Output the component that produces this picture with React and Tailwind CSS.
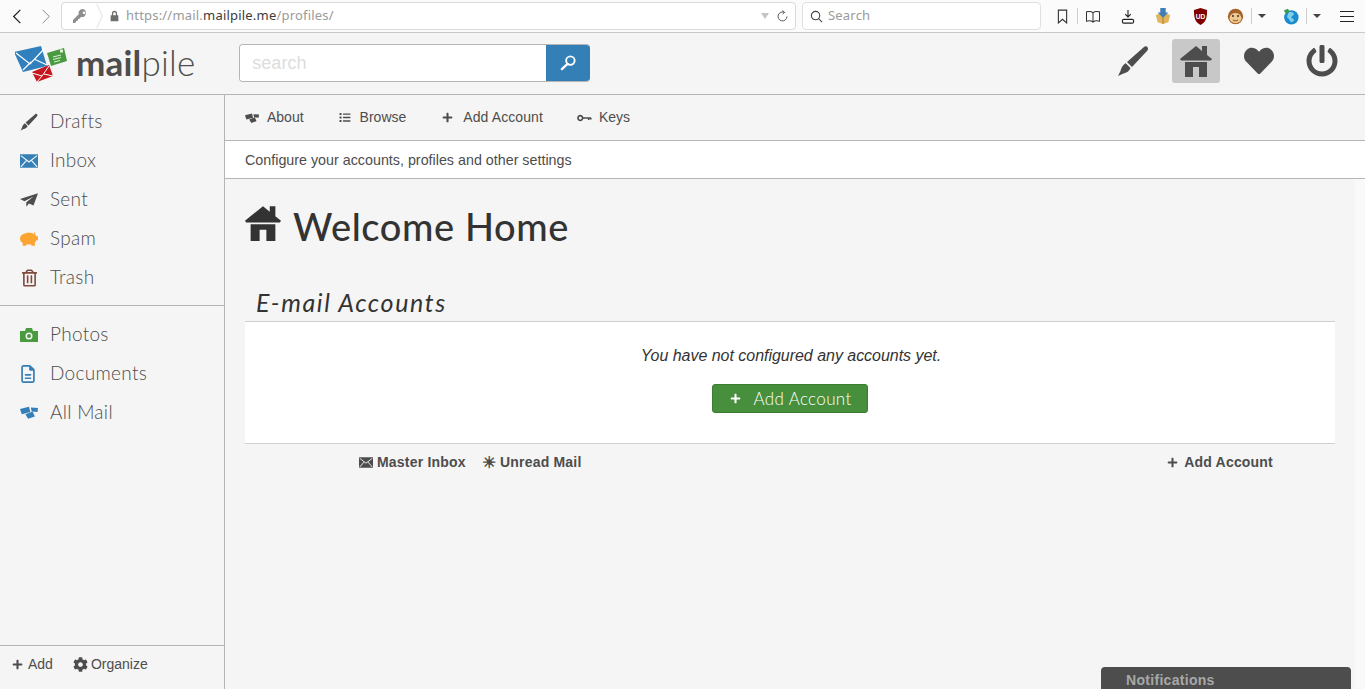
import { FaHeart, FaPowerOff, FaCog, FaPlus, FaRegTrashAlt, FaList } from "react-icons/fa";
import { FaRegFileLines } from "react-icons/fa6";

const slab = "font-['Lato','Liberation_Sans',sans-serif]";

const Pen = ({ className }) => (
  <svg viewBox="0 0 32 32" className={className} fill="currentColor">
    <path d="M31 3c-1-2-3-2-4-1L10 17l5 5L30 6c1-1 1-2 1-3z" />
    <path d="M9 18.500l4.500 4.500c-1 3-4 5-7 5.500L1 31l2.500-5c.5-3 2.500-6.500 5.500-8z" />
  </svg>
);

// font awesome 4 style house, with the chimney on the roof
const House = ({ className }) => (
  <svg viewBox="0 0 32 32" className={className} fill="currentColor">
    <path d="M16 1L0 14l1 1.500h30l1-1.500-5-4V1h-5v5z" />
    <path d="M5 17h22v15h-8V22h-6v10H5z" />
  </svg>
);

const Wrench = () => (
  <svg viewBox="0 0 16 16" className="w-[16px] h-[16px] text-[#8e8e8e]" fill="currentColor">
    <path d="M10.500 1a4 4 0 0 0-3.800 5.200L1 12v3h2l1-1v-1h1l1-1v-1h1l2-2a4 4 0 1 0 1.500-8zm1.500 2.500a1.300 1.300 0 1 1 0 2.600 1.300 1.300 0 0 1 0-2.600z" />
  </svg>
);

const Plane = ({ className }) => (
  <svg viewBox="0 0 20 15" className={className} fill="currentColor">
    <path d="M20 0L0 6.500l5 2.500L15 3.500 7 10v5l3-3.500 5 2z" />
  </svg>
);

const Piggy = ({ className }) => (
  <svg viewBox="0 0 20 16" className={className} fill="currentColor">
    <path d="M16.500 0l-1 3C14 2 12 1.500 10 1.500 4.500 1.500 0 4.500 0 8c0 2.500 1.500 4 3 5v3h4v-1.500c2 .4 4 .4 5.500 0V16h4v-3.500c1-.7 1.300-1.500 1.500-2.500h2V5.500h-2c-.3-.5-.6-1-1-1.400z" />
  </svg>
);

const Camera = ({ className }) => (
  <svg viewBox="0 0 18 14" className={className} fill="currentColor">
    <path fillRule="evenodd" d="M0 3h5l1-3h6l1 3h5v11H0zM9 4.500a3.500 3.500 0 1 0 0 7 3.500 3.500 0 0 0 0-7zM9 6a2 2 0 1 1 0 4 2 2 0 0 1 0-4z" />
  </svg>
);

const Envelope = ({ className, lines = "#f5f5f5" }) => (
  <svg viewBox="0 0 20 15" className={className}>
    <rect width="20" height="15" fill="currentColor" />
    <path d="M1 1.500l9 7 9-7M1 14l6.500-7.500M19 14l-6.500-7.500" fill="none" stroke={lines} strokeWidth="1.300" />
  </svg>
);

const Mails = ({ className }) => (
  <svg viewBox="0 0 20 14" className={className} fill="currentColor">
    <path d="M0 3l10-2.500 1.500 6L2 9z" />
    <path d="M12 1.500l8 .5-.5 4.500-6.500-.5z" />
    <path d="M6 9l8-3 2.500 5.500L9 14z" />
  </svg>
);

const Key = ({ className }) => (
  <svg viewBox="0 0 16 8" className={className} fill="none" stroke="currentColor">
    <circle cx="3.500" cy="4" r="2.500" strokeWidth="1.700" />
    <path d="M6 4h9M12.500 4v2M14.800 4v1.500" strokeWidth="1.700" />
  </svg>
);

const Logo = () => (
  <svg viewBox="0 0 52 38" className="w-[52px] h-[38px]">
    <path d="M0 6L27 0l6 20-24 6z" transform="translate(-1 1)" fill="#2f80bd" />
    <path d="M1 8l14 11L30 3M8 25l8-8M32 20l-13-6" fill="none" stroke="#fff" strokeWidth="1.200" />
    <path d="M32 8l17-5 3 13-16 5z" fill="#4a9a3f" />
    <path d="M38 12l8-2M38 14.500l8-2M39 17l6-1.500" stroke="#dff0d8" strokeWidth="1" />
    <rect x="45" y="4.500" width="3" height="3" fill="#dff0d8" />
    <path d="M18 28l17-7 4 11-16 6z" transform="translate(-1 -1)" fill="#c4161c" />
    <path d="M17 28l10 3 7-10M22 37l5-6M38 31l-9-2" fill="none" stroke="#fff" strokeWidth="1" />
  </svg>
);

const Puzzle = () => (
  <svg viewBox="0 0 20 20" className="w-[18px] h-[18px]">
    <path d="M2 9l8-3 8 3-2 8-6 2-6-2z" fill="#e2b45c" />
    <path d="M10 11v8" stroke="#a87a2a" />
    <path d="M7 1h6v5h3l-6 6-6-6h3z" fill="#3f7fb5" />
  </svg>
);

const Shield = () => (
  <svg viewBox="0 0 16 18" className="w-[15px] h-[17px]">
    <path d="M8 0l7 2c0 8-1 13-7 16C2 15 1 10 1 2z" fill="#800000" />
    <text x="8" y="11.500" textAnchor="middle" fontSize="7" fontWeight="700" fill="#fff" fontFamily="Liberation Sans">UD</text>
  </svg>
);

const Monkey = () => (
  <svg viewBox="0 0 20 20" className="w-[17px] h-[17px]">
    <circle cx="10" cy="10" r="9" fill="#a5622a" />
    <ellipse cx="10" cy="12" rx="7" ry="6" fill="#f0c98e" />
    <circle cx="7" cy="9.500" r="1.200" fill="#333" />
    <circle cx="13" cy="9.500" r="1.200" fill="#333" />
    <path d="M7 14c2 1.500 4 1.500 6 0" stroke="#6b3a13" fill="none" />
  </svg>
);

const Globe = () => (
  <svg viewBox="0 0 20 20" className="w-[17px] h-[17px]">
    <circle cx="11" cy="11" r="8.500" fill="#1c8ccf" />
    <path d="M8 5c3-1 6 0 6 2s-3 2-3 4 3 1 3 3-3 3-4 2-1-3-3-4 0-5 1-7z" fill="#7fd0ea" />
    <path d="M2 3l5-2 2 3-4 3z" fill="#3c9a52" />
  </svg>
);

const Caret = () => <span className="w-0 h-0 border-x-[4px] border-x-transparent border-t-[4px] border-t-[#444]" />;

const BrowserBar = () => (
  <div className="h-[33px] shrink-0 bg-[#fbfbfb] border-b border-[#c9c9c9] flex items-center text-[#8a8a8a]">
    <svg viewBox="0 0 12 18" className="w-[10px] h-[15px] ml-[12px] text-[#222]" fill="none" stroke="currentColor" strokeWidth="1.500"><path d="M10 1L2 9l8 8" /></svg>
    <svg viewBox="0 0 12 18" className="w-[10px] h-[15px] ml-[19px] text-[#8c8c8c]" fill="none" stroke="currentColor" strokeWidth="1.200"><path d="M2 1l8 8-8 8" /></svg>
    <div className="ml-[10px] w-[735px] h-[28px] bg-white border border-[#d9d9d9] rounded-[4px] flex items-center relative">
      <div className="w-[34px] flex justify-center pl-[2px]"><Wrench /></div>
      <svg viewBox="0 0 8 28" className="w-[7px] h-[26px] text-[#dcdcdc]" fill="none" stroke="currentColor"><path d="M1 0l6 14-6 14" /></svg>
      <svg viewBox="0 0 12 14" className="w-[11px] h-[12px] ml-[6px] text-[#6e6e6e]" fill="currentColor"><path d="M3 6V4a3 3 0 0 1 6 0v2h1.500v7h-9V6zm1.500 0h3V4a1.500 1.500 0 0 0-3 0z" /></svg>
      <span className="ml-[6px] text-[13px] font-['Noto_Sans',sans-serif] text-[#9a9a9a] tracking-[0.2px]">https://mail.<span className="text-[#3c3c3c]">mailpile.me</span>/profiles/</span>
      <span className="ml-auto w-0 h-0 border-x-[4px] border-x-transparent border-t-[6px] border-t-[#c4c4c4]" />
      <svg viewBox="0 0 16 16" className="w-[13px] h-[13px] ml-[7px] mr-[6px] text-[#555]" fill="none" stroke="currentColor" strokeWidth="1.200"><path d="M13.500 8a5.500 5.500 0 1 1-3-5M8 .500l2.500 2.500L8 5" /></svg>
    </div>
    <div className="ml-[6px] w-[239px] h-[28px] bg-white border border-[#e0e0e0] rounded-[4px] flex items-center pl-[7px]">
      <svg viewBox="0 0 14 14" className="w-[13px] h-[13px] text-[#444]" fill="none" stroke="currentColor" strokeWidth="1.200"><circle cx="6" cy="6" r="4.500" /><path d="M9.500 9.500L13 13" /></svg>
      <span className="ml-[5px] text-[13px] font-['Noto_Sans',sans-serif] text-[#9a9a9a] tracking-[0.2px]">Search</span>
    </div>
    <svg viewBox="0 0 12 16" className="w-[11px] h-[15px] ml-[16px] text-[#333]" fill="none" stroke="currentColor" strokeWidth="1.200"><path d="M1.500 1h9v14L6 11l-4.500 4z" /></svg>
    <span className="w-px h-[16px] bg-[#ccc] ml-[9px]" />
    <svg viewBox="0 0 16 14" className="w-[16px] h-[13px] ml-[7px] text-[#333]" fill="none" stroke="currentColor" strokeWidth="1.100"><path d="M8 3C6.500 1.500 3 1.500 1 2v10c2-.5 5.500-.5 7 1 1.500-1.500 5-1.500 7-1V2c-2-.5-5.500-.5-7 1zm0 0v10" /></svg>
    <svg viewBox="0 0 14 16" className="w-[14px] h-[15px] ml-[20px] text-[#222]" fill="none" stroke="currentColor" strokeWidth="1.200"><path d="M7 1v7M4 5.500L7 8.500l3-3" /><rect x="1" y="11" width="12" height="4" rx="1.500" /></svg>
    <div className="ml-[19px]"><Puzzle /></div>
    <div className="ml-[21px]"><Shield /></div>
    <div className="ml-[19px]"><Monkey /></div>
    <span className="w-px h-[16px] bg-[#ccc] ml-[7px]" />
    <div className="ml-[6px] flex"><Caret /></div>
    <div className="ml-[16px]"><Globe /></div>
    <span className="w-px h-[16px] bg-[#ccc] ml-[7px]" />
    <div className="ml-[6px] flex"><Caret /></div>
    <div className="ml-[19px] w-[14px] flex flex-col gap-[4px]">
      <span className="h-px bg-[#222]" /><span className="h-px bg-[#222]" /><span className="h-px bg-[#222]" />
    </div>
  </div>
);

const AppHeader = () => (
  <div className="h-[62px] shrink-0 bg-[#f5f5f5] border-b border-[#b5b5b5] flex items-center text-[#4d4d4d]">
    <div className="ml-[15px]"><Logo /></div>
    <span className={`ml-[9px] mb-[3px] text-[35px] leading-none text-[#4d4d4d] tracking-[0.2px] ${slab}`}><span className="font-bold">mail</span><span className="font-light">pile</span></span>
    <div className="ml-[44px] mb-[2px] w-[351px] h-[38px] flex rounded-[4px] overflow-hidden border border-[#b5b5b5] border-r-0">
      <div className="flex-1 bg-white pl-[12px] pt-[1px] flex items-center text-[18px] text-[#ddd] font-['Liberation_Sans',sans-serif]">search</div>
      <div className="w-[44px] bg-[#337fb6] flex items-center justify-center">
        <svg viewBox="0 0 18 18" className="w-[17px] h-[17px] text-white" fill="none" stroke="currentColor"><circle cx="11" cy="7" r="4.500" strokeWidth="2" /><path d="M8 10.500L2 16" strokeWidth="2.500" strokeLinecap="round" /></svg>
      </div>
    </div>
    <div className="ml-auto mb-[5px] flex items-center pr-[27px]">
      <Pen className="w-[32px] h-[32px]" />
      <div className="ml-[23px] w-[48px] h-[44px] rounded-[3px] bg-[#c8c8c8] flex items-center justify-center"><House className="w-[32px] h-[32px]" /></div>
      <FaHeart className="ml-[24px] w-[30px] h-[30px]" />
      <FaPowerOff className="ml-[32px] w-[32px] h-[32px]" />
    </div>
  </div>
);

const folders = [
  { label: "Drafts", color: "text-[#4d4d4d]", icon: <Pen className="w-[18px] h-[18px]" /> },
  { label: "Inbox", color: "text-[#337fb6]", icon: <Envelope className="w-[18px] h-[14px]" /> },
  { label: "Sent", color: "text-[#4d4d4d]", icon: <Plane className="w-[18px] h-[14px]" /> },
  { label: "Spam", color: "text-[#fba42f]", icon: <Piggy className="w-[18px] h-[15px]" /> },
  { label: "Trash", color: "text-[#7f4a3a]", icon: <FaRegTrashAlt className="w-[15px] h-[18px] ml-[2px]" /> },
];

const tags = [
  { label: "Photos", color: "text-[#4a9a3f]", icon: <Camera className="w-[18px] h-[14px]" /> },
  { label: "Documents", color: "text-[#337fb6]", icon: <FaRegFileLines className="w-[16px] h-[18px]" /> },
  { label: "All Mail", color: "text-[#337fb6]", icon: <Mails className="w-[18px] h-[13px]" /> },
];

const SideItem = ({ item }) => (
  <div className="h-[39px] flex items-center pl-[20px]">
    <span className={`w-[30px] flex ${item.color}`}>{item.icon}</span>
    <span className={`text-[19px] font-light text-[#4d4d4d] tracking-[0.3px] ${slab}`}>{item.label}</span>
  </div>
);

const Sidebar = () => (
  <div className="w-[225px] shrink-0 bg-[#f5f5f5] border-r border-[#b5b5b5] flex flex-col">
    <div className="pt-[7px] pb-[8px] border-b border-[#b5b5b5]">
      {folders.map((f) => <SideItem key={f.label} item={f} />)}
    </div>
    <div className="pt-[9px]">
      {tags.map((t) => <SideItem key={t.label} item={t} />)}
    </div>
    <div className="mt-auto h-[44px] pb-[6px] border-t border-[#b5b5b5] flex items-center pl-[12px] text-[14px] text-[#4d4d4d] font-['Liberation_Sans',sans-serif]">
      <FaPlus className="w-[11px] h-[11px]" />
      <span className="ml-[5px]">Add</span>
      <FaCog className="ml-[20px] w-[15px] h-[15px]" />
      <span className="ml-[3px]">Organize</span>
    </div>
  </div>
);

const SubNav = () => (
  <>
    <div className="h-[46px] shrink-0 bg-[#f5f5f5] border-b border-[#b5b5b5] flex items-center pl-[20px] text-[14px] text-[#4d4d4d]">
      <Mails className="w-[14px] h-[10px]" />
      <span className="ml-[8px]">About</span>
      <FaList className="ml-[34px] w-[14px] h-[11px]" />
      <span className="ml-[8px]">Browse</span>
      <FaPlus className="ml-[36px] w-[11px] h-[11px]" />
      <span className="ml-[10px] tracking-[0.1px]">Add Account</span>
      <Key className="ml-[34px] w-[15px] h-[8px]" />
      <span className="ml-[7px]">Keys</span>
    </div>
    <div className="h-[38px] shrink-0 bg-white border-b border-[#b5b5b5] flex items-center pt-[2px] pl-[20px] text-[14.3px] text-[#4d4d4d]">
      Configure your accounts, profiles and other settings
    </div>
  </>
);

const Content = () => (
  <div className="flex-1 bg-[#f9f9f9] relative min-h-0">
    <div className="h-full w-[1130px] bg-[#f5f5f5] rounded-tr-[4px] pl-[20px] pr-[20px]">
      <div className="flex items-center pt-[20px] h-[68px]">
        <House className="w-[36px] h-[36px] text-[#333]" />
        <h1 className={`ml-[12px] pt-[5px] text-[38px] leading-none font-medium text-[#333] tracking-[0.6px] ${slab}`}>Welcome Home</h1>
      </div>
      <h2 className={`mt-[40px] pl-[11px] text-[25px] leading-[30px] italic text-[#333] tracking-[1.6px] ${slab}`}>E-mail Accounts</h2>
      <div className="mt-[4px] h-[123px] bg-white border-y border-[#cfcfcf] flex flex-col items-center">
        <p className="mt-[24px] text-[16px] leading-[20px] italic text-[#333] ml-[2px] tracking-[-0.03px]">You have not configured any accounts yet.</p>
        <button className="mt-[18px] ml-[-1px] w-[156px] h-[29px] rounded-[3px] bg-[#478f3c] border border-[#3b7c32] flex items-center pl-[17px] text-white">
          <FaPlus className="w-[11px] h-[11px]" />
          <span className={`ml-[13px] text-[17px] font-light leading-none tracking-[0.35px] ${slab}`}>Add Account</span>
        </button>
      </div>
      <div className="h-[37px] flex items-center text-[14px] font-bold text-[#4d4d4d] tracking-[0.2px]">
        <Envelope className="ml-[114px] w-[14px] h-[11px]" />
        <span className="ml-[4px]">Master Inbox</span>
        <span className="ml-[16px] text-[16px] leading-none">☀</span>
        <span className="ml-[4px]">Unread Mail</span>
        <FaPlus className="ml-auto w-[11px] h-[11px]" />
        <span className="ml-[6px] mr-[62px]">Add Account</span>
      </div>
    </div>
    <div className="absolute right-[14px] bottom-0 w-[250px] h-[22px] bg-[#4d4d4d] rounded-t-[4px] pl-[25px] text-[14px] leading-[26px] font-bold text-[#a8a8a8] tracking-[0.3px]">
      Notifications
    </div>
  </div>
);

export default function App() {
  return (
    <div className="w-[1365px] h-[689px] overflow-hidden flex flex-col font-['Liberation_Sans',sans-serif] bg-[#f5f5f5]">
      <BrowserBar />
      <AppHeader />
      <div className="flex-1 flex min-h-0">
        <Sidebar />
        <div className="flex-1 flex flex-col min-w-0">
          <SubNav />
          <Content />
        </div>
      </div>
    </div>
  );
}
